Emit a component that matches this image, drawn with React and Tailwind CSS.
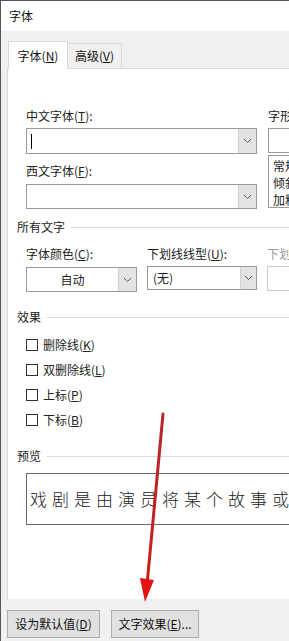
import React from 'react';

const font = { fontFamily: '"Noto Sans CJK SC", "Noto Sans", sans-serif' };

const Chevron = () => (
    <svg width="9" height="6" viewBox="0 0 9 6" fill="none">
        <path d="M1 1l3.5 3.5L8 1" stroke="#555" strokeWidth="1" />
    </svg>
);

const Select = ({ className, text, center, cursor, btnW = 'w-[18px]' }) => (
    <div className={`flex border border-[#9a9a9a] bg-white ${className}`}>
        <div className={`flex-1 flex items-center text-[12px] text-[#222] ${center ? 'justify-center' : 'pl-[5px]'}`}>
            {cursor && <div className="w-px h-[15px] bg-black ml-[-1px]" />}
            {text}
        </div>
        <div className={`${btnW} bg-[#e3e3e3] border-l border-[#d0d0d0] flex items-center justify-center`}>
            <Chevron />
        </div>
    </div>
);

const Check = ({ label, k }) => (
    <div className="h-[25px] flex items-center gap-[5px] text-[12px] text-[#222]">
        <div className="w-[12px] h-[12px] border border-[#333] bg-white" />
        <span>{label}(<u>{k}</u>)</span>
    </div>
);

const Section = ({ title, className }) => (
    <div className={`flex items-center gap-[6px] pl-[9px] h-[16px] text-[12px] text-[#222] ${className}`}>
        <span>{title}</span>
        <div className="flex-1 h-px bg-[#dcdcdc]" />
    </div>
);

export default function App() {
    return (
        <div className="relative w-[289px] h-[641px] overflow-hidden bg-[#f0f0f0] border-l border-t border-[#555]" style={font}>
            {/* Title */}
            <div className="h-[30px] bg-white flex items-center pl-[8px] text-[12px] text-[#111]">字体</div>

            {/* Tabs */}
            <div className="h-[37px] flex items-end pl-[7px]">
                <div className="h-[28px] w-[60px] bg-white border border-b-0 border-[#d9d9d9] flex items-center justify-center text-[12px] text-[#111] relative top-px z-10">
                    字体(<u>N</u>)
                </div>
                <div className="h-[25px] w-[54px] border border-l-0 border-b-0 border-[#d9d9d9] flex items-center justify-center text-[12px] text-[#111]">
                    高级(<u>V</u>)
                </div>
            </div>

            {/* Panel */}
            <div className="ml-[6px] h-[531px] bg-white border-t border-l border-[#d9d9d9] pt-[39px] text-[#222]">
                <div className="flex gap-[11px] pl-[18px]">
                    <div className="w-[231px] shrink-0 text-[12px]">
                        <div className="h-[16px] leading-[16px]">中文字体(<u>T</u>):</div>
                        <Select className="mt-[4px] h-[26px]" cursor />
                        <div className="mt-[9px] h-[16px] leading-[16px]">西文字体(<u>F</u>):</div>
                        <Select className="mt-[5px] h-[25px]" />
                    </div>
                    <div className="w-[60px] shrink-0 text-[12px]">
                        <div className="h-[16px] leading-[16px]">字形</div>
                        <div className="mt-[4px] h-[25px] border border-[#9a9a9a]" />
                        <div className="mt-[2px] h-[53px] border border-[#9a9a9a] pl-[4px] leading-[17px] pt-px">
                            <div>常规</div>
                            <div>倾斜</div>
                            <div>加粗</div>
                        </div>
                    </div>
                </div>

                <Section title="所有文字" className="mt-[10px]" />
                <div className="flex gap-[10px] pl-[18px] mt-[11px] text-[12px]">
                    <div className="w-[111px] shrink-0">
                        <div className="h-[16px] leading-[16px]">字体颜色(<u>C</u>):</div>
                        <Select className="mt-[5px] h-[25px]" text="自动" center />
                    </div>
                    <div className="w-[110px] shrink-0">
                        <div className="h-[16px] leading-[16px]">下划线线型(<u>U</u>):</div>
                        <Select className="mt-[4px] h-[24px]" text="(无)" btnW="w-[16px]" />
                    </div>
                    <div className="w-[60px] shrink-0">
                        <div className="h-[16px] leading-[16px] text-[#9a9a9a]">下划线颜色</div>
                        <div className="mt-[4px] h-[25px] border border-[#c8c8c8]" />
                    </div>
                </div>

                <Section title="效果" className="mt-[17px]" />
                <div className="pl-[18px] mt-[7px]">
                    <Check label="删除线" k="K" />
                    <Check label="双删除线" k="L" />
                    <Check label="上标" k="P" />
                    <Check label="下标" k="B" />
                </div>

                <Section title="预览" className="mt-[16px]" />
                <div className="ml-[18px] mt-[9px] h-[52px] w-[300px] border border-[#6a6a6a] flex items-center pl-[3px] whitespace-nowrap text-[17px] tracking-[5px] text-[#222] font-light">
                    戏剧是由演员将某个故事或情境
                </div>
            </div>

            {/* Footer */}
            <div className="flex gap-[11px] pl-[6px] pt-[11px]">
                <button className="h-[28px] w-[93px] bg-[#e1e1e1] border border-[#adadad] text-[12px] text-[#111]">
                    设为默认值(<u>D</u>)
                </button>
                <button className="h-[28px] w-[88px] bg-[#e1e1e1] border border-[#adadad] text-[12px] text-[#111]">
                    文字效果(<u>E</u>)...
                </button>
            </div>

            {/* Annotation arrow */}
            <svg className="absolute left-0 top-0 pointer-events-none" width="289" height="641">
                <defs>
                    <linearGradient id="arw" x1="0" y1="0" x2="0" y2="1">
                        <stop offset="0" stopColor="#b8262e" />
                        <stop offset="1" stopColor="#c81d1d" />
                    </linearGradient>
                </defs>
                <line x1="162" y1="413" x2="146" y2="584" stroke="url(#arw)" strokeWidth="3" strokeLinecap="round" />
                <polygon points="139,577 153,579 144,601" fill="#e31212" />
            </svg>
        </div>
    );
}
